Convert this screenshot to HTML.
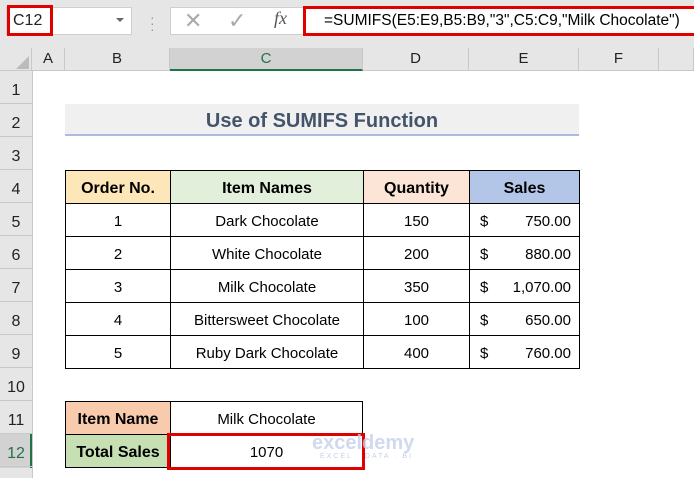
<!DOCTYPE html>
<html><head><style>
*{margin:0;padding:0;box-sizing:border-box}
body{width:694px;height:478px;overflow:hidden;background:#fff;font-family:"Liberation Sans",Arial,sans-serif;position:relative}
.a{position:absolute}
.tb{left:0;top:0;width:694px;height:48px;background:#e6e6e6}
.hdr{background:#e6e6e6;color:#222;font-size:15px;text-align:center;border-right:1px solid #c8c8c8;border-bottom:1px solid #c8c8c8}
.c{position:absolute;display:flex;align-items:center;justify-content:center;font-size:15px;color:#000;padding-top:3px}
.b{font-weight:bold;font-size:16px}
</style></head><body>
<div class="a tb"></div>
<div class="a" style="left:6px;top:7px;width:126px;height:28px;background:#fff;border:1px solid #cfcfcf"></div>
<div class="a" style="left:7px;top:5px;width:46px;height:31px;border:3px solid #e00000"></div>
<div class="a" style="left:13px;top:12px;font-size:16px;color:#222">C12</div>
<div class="a" style="left:116px;top:18px;width:0;height:0;border-left:4px solid transparent;border-right:4px solid transparent;border-top:4px solid #666"></div>
<div class="a" style="left:150px;top:14px;color:#999;font-size:14px;line-height:6px">·<br>·<br>·</div>
<div class="a" style="left:170px;top:7px;width:134px;height:28px;background:#fff;border:1px solid #cfcfcf"></div>
<div class="a" style="left:184px;top:8px;font-size:22px;color:#aaa">✕</div>
<div class="a" style="left:228px;top:8px;font-size:22px;color:#aaa">✓</div>
<div class="a" style="left:274px;top:8px;font-size:18px;color:#555;font-style:italic;font-family:'Liberation Serif',serif">fx</div>
<div class="a" style="left:303px;top:6px;width:391px;height:30px;background:#fff;border:3px solid #e00000;border-right:none"></div>
<div class="a" style="left:324px;top:12px;font-size:15.5px;color:#000;white-space:nowrap">=SUMIFS(E5:E9,B5:B9,"3",C5:C9,"Milk Chocolate")</div>

<div class="a hdr" style="left:0;top:48px;width:32px;height:23px"></div>
<div class="a" style="left:16px;top:56px;width:0;height:0;border-left:13px solid transparent;border-bottom:13px solid #bbb"></div>
<div class="a hdr" style="left:32px;top:48px;width:33px;height:23px;line-height:22px">A</div>
<div class="a hdr" style="left:65px;top:48px;width:105px;height:23px;line-height:22px">B</div>
<div class="a hdr" style="left:170px;top:48px;width:193px;height:23px;line-height:22px;background:#d2d2d2;color:#217346;border-bottom:2px solid #217346">C</div>
<div class="a hdr" style="left:363px;top:48px;width:106px;height:23px;line-height:22px">D</div>
<div class="a hdr" style="left:469px;top:48px;width:110px;height:23px;line-height:22px">E</div>
<div class="a hdr" style="left:579px;top:48px;width:80px;height:23px;line-height:22px">F</div>
<div class="a hdr" style="left:659px;top:48px;width:35px;height:23px"></div>

<div class="a" style="left:0;top:71px;width:33px;height:407px;background:#e6e6e6;border-right:1px solid #c8c8c8"></div>
<div class="a" style="left:0;top:434px;width:32px;height:34px;background:#d2d2d2;border-right:2px solid #217346"></div>
<div id="rh"></div>
<script>
var h='';for(var i=1;i<=12;i++){var t=71+33*(i-1);h+='<div class="a" style="left:0;top:'+t+'px;width:32px;height:33px;border-bottom:1px solid #c8c8c8;font-size:16px;color:'+(i==12?'#217346':'#222')+';display:flex;align-items:center;justify-content:center;padding-top:8px">'+i+'</div>';}
document.getElementById('rh').innerHTML=h;
</script>

<div class="a" style="left:65px;top:104px;width:514px;height:32px;background:#f0f0f0;border-bottom:2px solid #a9bcdc;color:#44546a;font-weight:bold;font-size:20px;text-align:center;line-height:34px">Use of SUMIFS Function</div>

<div id="tbl"></div>
<script>
var cols=[[65,105],[170,193],[363,106],[469,110]];
var hd=[['Order No.','#fde7b9'],['Item Names','#e2efda'],['Quantity','#fce4d6'],['Sales','#b4c6e7']];
var rows=[['1','Dark Chocolate','150','750.00'],['2','White Chocolate','200','880.00'],['3','Milk Chocolate','350','1,070.00'],['4','Bittersweet Chocolate','100','650.00'],['5','Ruby Dark Chocolate','400','760.00']];
var s='';var ty=170;
for(var j=0;j<4;j++){s+='<div class="c b" style="left:'+cols[j][0]+'px;top:'+ty+'px;width:'+(cols[j][1]+1)+'px;height:34px;background:'+hd[j][1]+';border:1px solid #000">'+hd[j][0]+'</div>';}
for(var r=0;r<5;r++){var y=ty+33*(r+1);for(var j=0;j<4;j++){var inner=rows[r][j];if(j==3)inner='<span style="position:absolute;left:10px">$</span><span style="position:absolute;right:8px">'+inner+'</span>';s+='<div class="c" style="left:'+cols[j][0]+'px;top:'+y+'px;width:'+(cols[j][1]+1)+'px;height:34px;border:1px solid #000">'+inner+'</div>';}}
s+='<div class="c b" style="left:65px;top:401px;width:106px;height:34px;background:#f8cbad;border:1px solid #000">Item Name</div>';
s+='<div class="c" style="left:170px;top:401px;width:193px;height:34px;border:1px solid #000">Milk Chocolate</div>';
s+='<div class="c b" style="left:65px;top:434px;width:106px;height:34px;background:#c6e0b4;border:1px solid #000">Total Sales</div>';
s+='<div class="c" style="left:170px;top:434px;width:193px;height:34px;border:1px solid #000">1070</div>';
document.getElementById('tbl').innerHTML=s;
</script>
<div class="a" style="left:167px;top:433px;width:198px;height:37px;border:3px solid #e00000"></div>
<div class="a" style="left:312px;top:432px;font-size:20px;font-weight:bold;color:#c6d0ea;opacity:.8">exceldemy</div>
<div class="a" style="left:320px;top:453px;font-size:7px;color:#c6d0ea;letter-spacing:2px">EXCEL · DATA · BI</div>
</body></html>
